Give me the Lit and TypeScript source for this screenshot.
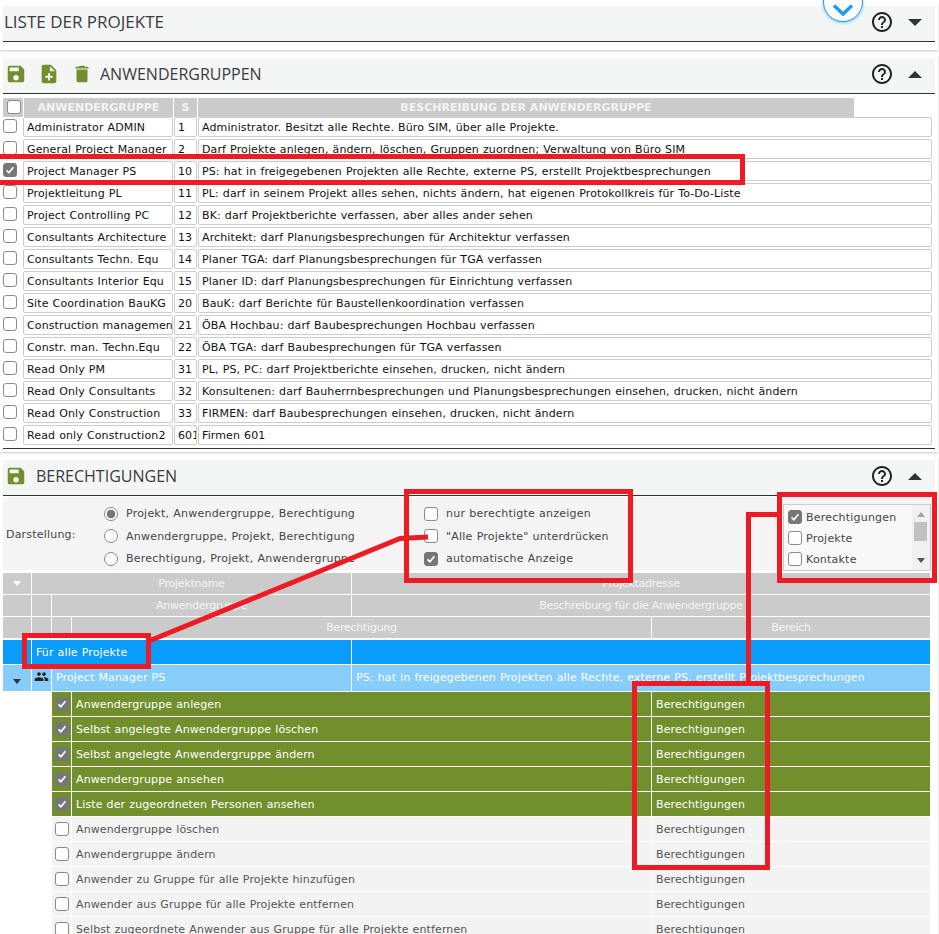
import { LitElement, html, css, svg } from "lit";
import { customElement } from "lit/decorators.js";

const saveIcon = svg`<path d="M17 3H5a2 2 0 0 0-2 2v14a2 2 0 0 0 2 2h14a2 2 0 0 0 2-2V7l-4-4zm-5 16a3 3 0 1 1 0-6 3 3 0 0 1 0 6zm3-10H5V5h10v4z" />`;
const addIcon = svg`<path d="M14 2H6c-1.1 0-2 .9-2 2v16c0 1.1.9 2 2 2h12c1.1 0 2-.9 2-2V8l-6-6zm2 14h-3v3h-2v-3H8v-2h3v-3h2v3h3v2zm-3-7V3.5L18.5 9H13z" />`;
const trashIcon = svg`<path d="M6 19c0 1.1.9 2 2 2h8c1.1 0 2-.9 2-2V7H6v12zM19 4h-3.5l-1-1h-5l-1 1H5v2h14V4z" />`;
const helpIcon = svg`<path d="M11 18h2v-2h-2v2zm1-16C6.48 2 2 6.48 2 12s4.48 10 10 10 10-4.48 10-10S17.52 2 12 2zm0 18c-4.41 0-8-3.59-8-8s3.59-8 8-8 8 3.59 8 8-3.59 8-8 8zm0-14c-2.21 0-4 1.79-4 4h2c0-1.1.9-2 2-2s2 .9 2 2c0 2-3 1.75-3 5h2c0-2.25 3-2.5 3-5 0-2.21-1.79-4-4-4z" />`;
const peopleIcon = svg`<path d="M16 11c1.66 0 3-1.34 3-3s-1.34-3-3-3-3 1.34-3 3 1.34 3 3 3zm-8 0c1.66 0 3-1.34 3-3S9.66 5 8 5 5 6.34 5 8s1.34 3 3 3zm0 2c-2.33 0-7 1.17-7 3.5V19h14v-2.5c0-2.33-4.67-3.5-7-3.5zm8 0c-.29 0-.62.02-.97.05 1.16.84 1.97 1.97 1.97 3.45V19h6v-2.5c0-2.33-4.67-3.5-7-3.5z" />`;

const groups = [
	["Administrator ADMIN", "1", "Administrator. Besitzt alle Rechte. Büro SIM, über alle Projekte."],
	["General Project Manager", "2", "Darf Projekte anlegen, ändern, löschen, Gruppen zuordnen; Verwaltung von Büro SIM"],
	["Project Manager PS", "10", "PS: hat in freigegebenen Projekten alle Rechte, externe PS, erstellt Projektbesprechungen"],
	["Projektleitung PL", "11", "PL: darf in seinem Projekt alles sehen, nichts ändern, hat eigenen Protokollkreis für To-Do-Liste"],
	["Project Controlling PC", "12", "BK: darf Projektberichte verfassen, aber alles ander sehen"],
	["Consultants Architecture", "13", "Architekt: darf Planungsbesprechungen für Architektur verfassen"],
	["Consultants Techn. Equ", "14", "Planer TGA: darf Planungsbesprechungen für TGA verfassen"],
	["Consultants Interior Equ", "15", "Planer ID: darf Planungsbesprechungen für Einrichtung verfassen"],
	["Site Coordination BauKG", "20", "BauK: darf Berichte für Baustellenkoordination verfassen"],
	["Construction management", "21", "ÖBA Hochbau: darf Baubesprechungen Hochbau verfassen"],
	["Constr. man. Techn.Equ", "22", "ÖBA TGA: darf Baubesprechungen für TGA verfassen"],
	["Read Only PM", "31", "PL, PS, PC: darf Projektberichte einsehen, drucken, nicht ändern"],
	["Read Only Consultants", "32", "Konsultenen: darf Bauherrnbesprechungen und Planungsbesprechungen einsehen, drucken, nicht ändern"],
	["Read Only Construction", "33", "FIRMEN: darf Baubesprechungen einsehen, drucken, nicht ändern"],
	["Read only Construction2", "601", "Firmen 601"],
];

const rights: [string, boolean][] = [
	["Anwendergruppe anlegen", true],
	["Selbst angelegte Anwendergruppe löschen", true],
	["Selbst angelegte Anwendergruppe ändern", true],
	["Anwendergruppe ansehen", true],
	["Liste der zugeordneten Personen ansehen", true],
	["Anwendergruppe löschen", false],
	["Anwendergruppe ändern", false],
	["Anwender zu Gruppe für alle Projekte hinzufügen", false],
	["Anwender aus Gruppe für alle Projekte entfernen", false],
	["Selbst zugeordnete Anwender aus Gruppe für alle Projekte entfernen", false],
];

const icon = (body: unknown, cls: string) => html`<svg class=${cls} viewBox="0 0 24 24" aria-hidden="true">${body}</svg>`;

const box = (checked: boolean) => html`<span class="box ${checked ? "checked" : ""}">
	${checked ? html`<svg viewBox="0 0 14 14"><path d="M3 7.5l2.7 2.8L11 3.8" /></svg>` : ""}
</span>`;

@customElement("app-root")
export class AppRoot extends LitElement {
	static styles = css`
		:host {
			display: block;
			position: relative;
			height: 934px;
			overflow: hidden;
			background: #fff;
			font-family: "DejaVu Sans", Verdana, sans-serif;
			font-size: 11px;
			letter-spacing: 0.12px;
			word-spacing: 0.4px;
			color: #222;
		}

		.panel {
			background: #fff;
			width: 938px;
			padding: 3px 0 0 3px;
			box-sizing: border-box;
			box-shadow: 0 1px 2px rgba(0, 0, 0, 0.22);
		}

		.panel.first {
			height: 47px;
			margin: 3px 0 5px;
			padding-top: 3px;
		}

		.panel.second {
			height: 397px;
			margin-bottom: 5px;
		}

		.panel.third {
			height: 480px;
		}

		.head {
			display: flex;
			align-items: center;
			width: 932px;
			height: 32px;
			padding-bottom: 3px;
			background: #f4f6f6;
			border-bottom: 1px solid #333;
			font-family: "Open Sans", sans-serif;
			font-size: 16px;
			letter-spacing: 0;
			word-spacing: 0;
			color: #3a3a42;
		}

		.first .head {
			padding-left: 1px;
			width: 931px;
			font-size: 17px;
		}

		.head .title {
			flex: 1;
		}

		.first .head .title {
			padding-bottom: 2px;
		}

		.tool {
			width: 22px;
			height: 22px;
			fill: #728f2e;
			flex-shrink: 0;
		}

		.tool.save {
			margin-left: 2px;
			margin-right: 9px;
		}

		.second .tool.save {
			margin-right: 11px;
		}

		.tool.add {
			margin-right: 11px;
		}

		.tool.trash {
			margin-right: 7px;
		}

		.help {
			width: 24px;
			height: 24px;
			fill: #222;
			margin-right: 14px;
		}

		.caret {
			width: 0;
			height: 0;
			border-left: 7px solid transparent;
			border-right: 7px solid transparent;
			margin-right: 13px;
		}

		.caret.down {
			border-top: 7px solid #333;
		}

		.caret.up {
			border-bottom: 7px solid #333;
		}

		.cols {
			display: grid;
			grid-template-columns: 19px 150px 23px 1fr;
			column-gap: 1px;
		}

		.thead {
			grid-template-columns: 20px 149px 23px 656px;
			margin-top: 4px;
			height: 19px;
			letter-spacing: 0;
			word-spacing: 0;
		}

		.thead > div {
			background: #cbcbcb;
			color: #f4f4f4;
			font-weight: bold;
			text-align: center;
			line-height: 20px;
			height: 19px;
		}

		.thead > .pick {
			display: flex;
			padding: 2px 0 0 4px;
			box-sizing: border-box;
		}

		.grouprow {
			width: 929px;
			height: 22px;
		}

		.grouprow .box {
			margin-top: 2px;
		}

		.field {
			height: 20px;
			box-sizing: border-box;
			border: 1px solid #ccc;
			border-radius: 2px;
			background: #fff;
			color: #111;
			line-height: 20px;
			padding-left: 3px;
			overflow: hidden;
			white-space: nowrap;
		}

		.rule {
			width: 932px;
			margin-top: 1px;
			border-top: 1px solid #333;
		}

		.box {
			display: block;
			width: 14px;
			height: 14px;
			box-sizing: border-box;
			border: 1px solid #8a8a8a;
			border-radius: 3px;
			background: #fff;
			flex-shrink: 0;
		}

		.box.checked {
			background: #777;
			border-color: #777;
		}

		.box svg {
			display: block;
			width: 12px;
			height: 12px;
			fill: none;
			stroke: #fff;
			stroke-width: 2;
		}

		.options {
			display: grid;
			grid-template-columns: 102px 319px 359px 148px;
			width: 928px;
			height: 73px;
			margin-top: 1px;
			background: #f4f4f4;
			color: #444;
			letter-spacing: 0.22px;
			align-items: center;
		}

		.options .label {
			padding-left: 3px;
			letter-spacing: 0.2px;
		}

		.stack {
			display: flex;
			flex-direction: column;
			gap: 8.5px;
			padding-top: 4px;
		}

		.opt {
			display: flex;
			align-items: center;
			gap: 8px;
			height: 14px;
			white-space: nowrap;
		}

		.radio {
			width: 14px;
			height: 14px;
			margin-left: -1px;
			box-sizing: border-box;
			border: 1px solid #888;
			border-radius: 50%;
			background: #fff;
		}

		.radio.on {
			background: radial-gradient(circle, #777 0 4px, #fff 4.6px);
		}

		.listbox {
			display: flex;
			align-self: start;
			height: 67px;
			margin-top: 7px;
			box-sizing: border-box;
			border: 1px solid #ccc;
			background: #f8f8f8;
		}

		.listitems {
			flex: 1;
			display: flex;
			flex-direction: column;
			gap: 7px;
			padding: 5px 0 0 4px;
		}

		.listitems .opt {
			gap: 4px;
		}

		.scroll {
			position: relative;
			width: 18px;
			background: #f1f1f1;
		}

		.scroll .thumb {
			position: absolute;
			top: 17px;
			left: 2px;
			width: 13px;
			height: 19px;
			background: #c1c1c1;
		}

		.scroll .arrow {
			position: absolute;
			left: 5px;
			width: 0;
			height: 0;
			border-left: 4px solid transparent;
			border-right: 4px solid transparent;
		}

		.scroll .arrow.top {
			top: 7px;
			border-bottom: 5px solid #a3a3a3;
		}

		.scroll .arrow.bottom {
			bottom: 7px;
			border-top: 5px solid #555;
		}

		.grid {
			width: 927px;
			margin-top: 3px;
		}

		.line {
			display: grid;
			grid-template-columns: 28px 19px 19px 279px 299px 278px;
			column-gap: 1px;
			margin-bottom: 1px;
			height: 24px;
			line-height: 26px;
			white-space: nowrap;
		}

		.line > div {
			overflow: hidden;
			padding-left: 4px;
			min-width: 0;
		}

		.line.top {
			height: 21px;
			line-height: 22px;
			letter-spacing: -0.25px;
			word-spacing: 0;
		}

		.line.top > div {
			background: #cbcbcb;
			color: #f6f6f6;
			text-align: center;
			padding: 0;
		}

		.line.top.last {
			margin-bottom: 2px;
		}

		.span2 {
			grid-column: span 2;
		}

		.span3 {
			grid-column: span 3;
		}

		.line.top > .sort {
			display: flex;
			align-items: center;
			justify-content: center;
		}

		.tri {
			width: 0;
			height: 0;
			border-left: 4.5px solid transparent;
			border-right: 4.5px solid transparent;
			border-top: 5px solid #fff;
		}

		.tri.dark {
			border-top-color: #333;
		}

		.line.all > div {
			background: #0a9cfb;
			color: #fff;
		}

		.line.group {
			height: 26px;
			line-height: 25px;
		}

		.line.group > div {
			background: #87cdfb;
			color: #fff;
		}

		.line.group > .sort {
			display: flex;
			align-items: center;
			justify-content: center;
			padding: 6px 0 0;
			box-sizing: border-box;
		}

		.line.group > .who {
			display: flex;
			align-items: center;
			padding: 0;
			justify-content: center;
		}

		.who svg {
			width: 15px;
			height: 15px;
			fill: #222;
			margin-top: -3px;
		}

		.line > .blank {
			background: none;
		}

		.line .check {
			display: flex;
			align-items: center;
			justify-content: center;
			padding: 0;
		}

		.line.on .text,
		.line.on .check {
			background: #728f2e;
			color: #fff;
		}

		.line.off .text,
		.line.off .check {
			background: #f3f3f3;
			color: #555;
		}

		.floater {
			position: absolute;
			left: 823px;
			top: -18px;
			width: 40px;
			height: 40px;
			box-sizing: border-box;
			border: 1px solid #1e9bf0;
			border-radius: 50%;
			background: #fff;
			box-shadow: 0 1px 3px rgba(30, 155, 240, 0.5);
		}

		.floater svg {
			position: absolute;
			left: 8px;
			top: 21px;
			width: 22px;
			height: 12px;
			fill: none;
			stroke: #1e9bf0;
			stroke-width: 3.5;
		}

		.marks {
			position: absolute;
			left: 0;
			top: 0;
			width: 939px;
			height: 934px;
			pointer-events: none;
			fill: none;
			stroke: #ed1c24;
			stroke-width: 5;
		}
	`;

	head(title: string, open: boolean, tools: unknown = "") {
		return html`<div class="head">
			${tools}
			<span class="title">${title}</span>
			${icon(helpIcon, "help")}
			<span class="caret ${open ? "up" : "down"}"></span>
		</div>`;
	}

	render() {
		return html`
			<section class="panel first">${this.head("LISTE DER PROJEKTE", false)}</section>

			<section class="panel second">
				${this.head(
					"ANWENDERGRUPPEN",
					true,
					html`${icon(saveIcon, "tool save")}${icon(addIcon, "tool add")}${icon(trashIcon, "tool trash")}`,
				)}
				<div class="cols thead">
					<div class="pick">${box(false)}</div>
					<div>ANWENDERGRUPPE</div>
					<div>S</div>
					<div>BESCHREIBUNG DER ANWENDERGRUPPE</div>
				</div>
				${groups.map(
					([name, s, text]) => html`<div class="cols grouprow">
						${box(name === "Project Manager PS")}
						<div class="field">${name}</div>
						<div class="field">${s}</div>
						<div class="field">${text}</div>
					</div>`,
				)}
				<div class="rule"></div>
			</section>

			<section class="panel third">
				${this.head("BERECHTIGUNGEN", true, icon(saveIcon, "tool save"))}
				<div class="options">
					<div class="label">Darstellung:</div>
					<div class="stack">
						<div class="opt"><span class="radio on"></span>Projekt, Anwendergruppe, Berechtigung</div>
						<div class="opt"><span class="radio"></span>Anwendergruppe, Projekt, Berechtigung</div>
						<div class="opt"><span class="radio"></span>Berechtigung, Projekt, Anwendergruppe</div>
					</div>
					<div class="stack">
						<div class="opt">${box(false)}nur berechtigte anzeigen</div>
						<div class="opt">${box(false)}"Alle Projekte" unterdrücken</div>
						<div class="opt">${box(true)}automatische Anzeige</div>
					</div>
					<div class="listbox">
						<div class="listitems">
							<div class="opt">${box(true)}Berechtigungen</div>
							<div class="opt">${box(false)}Projekte</div>
							<div class="opt">${box(false)}Kontakte</div>
						</div>
						<div class="scroll">
							<span class="arrow top"></span>
							<span class="thumb"></span>
							<span class="arrow bottom"></span>
						</div>
					</div>
				</div>

				<div class="grid">
					<div class="line top">
						<div class="sort"><span class="tri"></span></div>
						<div class="span3">Projektname</div>
						<div class="span2">Projektadresse</div>
					</div>
					<div class="line top">
						<div></div>
						<div></div>
						<div class="span2">Anwendergruppe</div>
						<div class="span2">Beschreibung für die Anwendergruppe</div>
					</div>
					<div class="line top last">
						<div></div>
						<div></div>
						<div></div>
						<div class="span2">Berechtigung</div>
						<div>Bereich</div>
					</div>
					<div class="line all">
						<div></div>
						<div class="span3">Für alle Projekte</div>
						<div class="span2"></div>
					</div>
					<div class="line group">
						<div class="sort"><span class="tri dark"></span></div>
						<div class="who">${icon(peopleIcon, "")}</div>
						<div class="span2">Project Manager PS</div>
						<div class="span2">PS: hat in freigegebenen Projekten alle Rechte, externe PS, erstellt Projektbesprechungen</div>
					</div>
					${rights.map(
						([name, on]) => html`<div class="line ${on ? "on" : "off"}">
							<div class="blank"></div>
							<div class="blank"></div>
							<div class="check">${box(on)}</div>
							<div class="text span2">${name}</div>
							<div class="text">Berechtigungen</div>
						</div>`,
					)}
				</div>
			</section>

			<div class="floater">
				<svg viewBox="0 0 22 12"><path d="M2 1.5l9 8.5 9-8.5" /></svg>
			</div>

			<svg class="marks" viewBox="0 0 939 934" aria-hidden="true">
				<rect x="-3" y="156.5" width="745.5" height="26" />
				<rect x="406.5" y="491.5" width="224" height="89" />
				<rect x="779.5" y="494.5" width="155" height="86" />
				<rect x="24.5" y="635.5" width="124" height="31" />
				<rect x="634.5" y="683.5" width="133" height="184" />
				<path d="M149 641L400 538.500L428 537" />
				<path d="M777 514.500H746M748.500 514V683" />
			</svg>
		`;
	}
}
